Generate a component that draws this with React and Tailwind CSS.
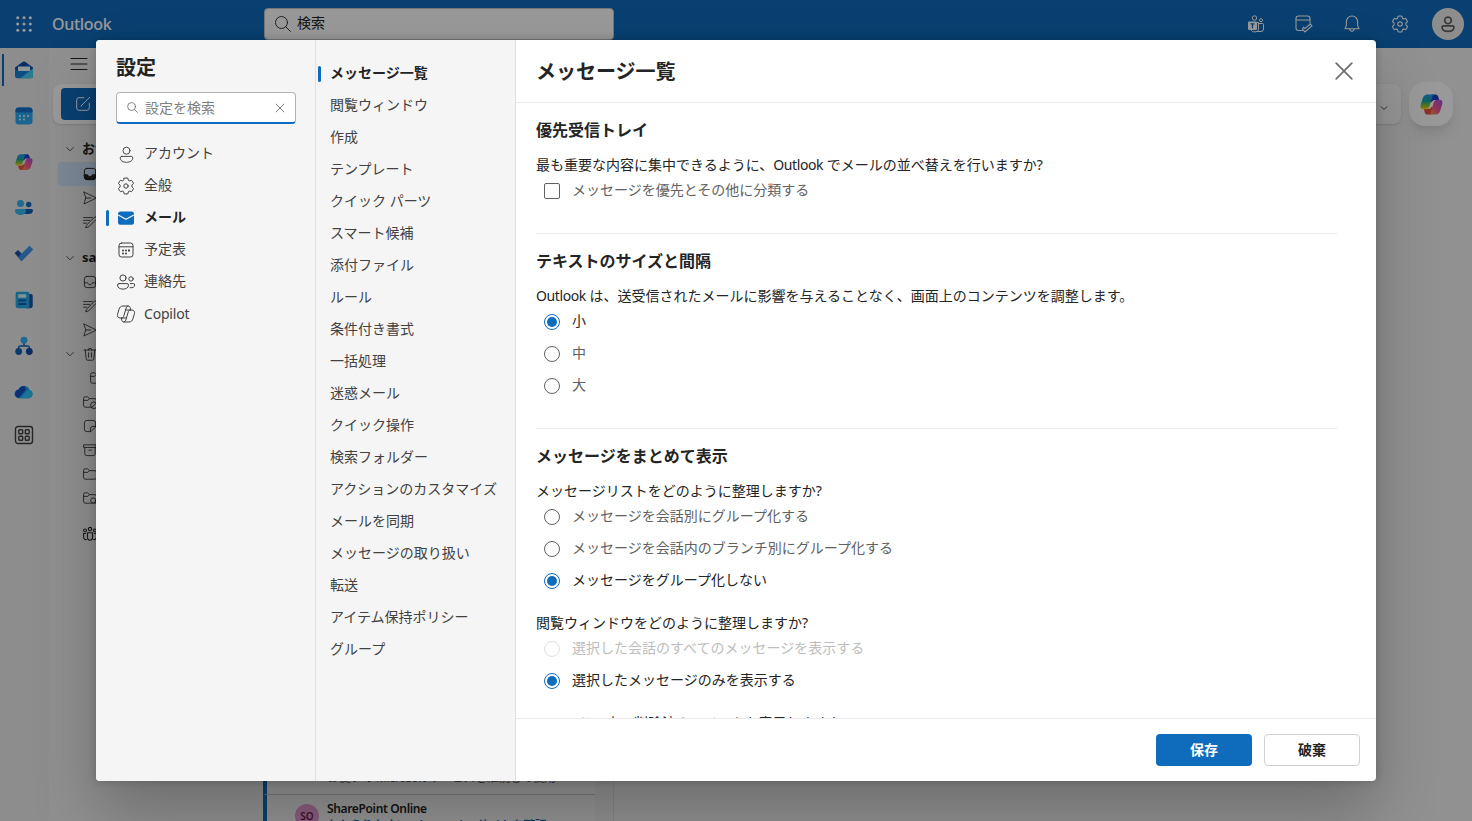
import React from "react";

const S = ({ s = 16, vb = 20, w = 1, className = "", children }) => (
  <svg width={s} height={s} viewBox={`0 0 ${vb} ${vb}`} fill="none" stroke="currentColor" strokeWidth={w} strokeLinecap="round" strokeLinejoin="round" className={`block shrink-0 ${className}`}>
    {children}
  </svg>
);

const GEAR =
  "M8.1 2.2 A8 8 0 0 1 11.9 2.2 L12.3 4 Q12.6 5 13.7 4.9 L15.5 4.3 A8 8 0 0 1 17.5 7.6 L16.1 8.9 Q15.3 10 16.1 11.1 L17.5 12.4 A8 8 0 0 1 15.5 15.7 L13.7 15.1 Q12.6 15 12.3 16 L11.9 17.8 A8 8 0 0 1 8.1 17.8 L7.7 16 Q7.4 15 6.3 15.1 L4.5 15.7 A8 8 0 0 1 2.5 12.4 L3.9 11.1 Q4.7 10 3.9 8.9 L2.5 7.6 A8 8 0 0 1 4.5 4.3 L6.3 4.9 Q7.4 5 7.7 4 Z";

const Gear = (p) => (
  <S {...p}>
    <path d={GEAR} />
    <circle cx="10" cy="10" r="2.2" />
  </S>
);
const Person = (p) => (
  <S {...p}>
    <circle cx="10" cy="6" r="3.7" />
    <path d="M5 12h10a1.6 1.6 0 0 1 1.6 1.6c0 3-3 4.6-6.6 4.6s-6.6-1.6-6.6-4.6A1.6 1.6 0 0 1 5 12z" />
  </S>
);
const Search = (p) => (
  <S {...p}>
    <circle cx="8.5" cy="8.5" r="6" />
    <path d="M12.9 12.9L17.5 17.5" />
  </S>
);
const Close = (p) => (
  <S {...p}>
    <path d="M3.5 3.5l13 13M16.5 3.5l-13 13" />
  </S>
);
const Chevron = (p) => (
  <S {...p}>
    <path d="M4.5 7.5L10 13l5.5-5.5" />
  </S>
);
const Calendar = (p) => (
  <S {...p}>
    <rect x="3" y="3" width="14" height="14" rx="2.5" />
    <path d="M3 6.8h14" />
    <g fill="currentColor" stroke="none">
      <circle cx="7" cy="10.6" r="1" /><circle cx="10" cy="10.6" r="1" /><circle cx="13" cy="10.6" r="1" />
      <circle cx="7" cy="13.6" r="1" /><circle cx="10" cy="13.6" r="1" /><circle cx="13" cy="10.6" r="1" />
    </g>
  </S>
);
const People = (p) => (
  <S {...p}>
    <circle cx="7" cy="6" r="3.1" />
    <circle cx="15" cy="6.9" r="2.2" />
    <path d="M3 11.600h8a1.500 1.500 0 0 1 1.500 1.500c0 2.700-2.400 4-5.500 4s-5.500-1.300-5.500-4a1.500 1.500 0 0 1 1.500-1.500z" />
    <path d="M14.300 11.600h3a1.400 1.400 0 0 1 1.400 1.400c0 2-1.800 3-4.600 2.700" />
  </S>
);
const CopilotLine = (p) => (
  <S {...p}>
    <path d="M5.500 14H4.200C2 14 1 12.300 1.600 10.200L3 5.400C3.600 3.300 4.800 2 7 2h5.200c1.200 0 1.700.8 2 1.800l.5 2.200" />
    <path d="M14.500 6h1.300C18 6 19 7.700 18.400 9.800L17 14.600C16.400 16.700 15.200 18 13 18H7.800c-1.200 0-1.700-.8-2-1.800L5.300 14" />
    <path d="M12.300 2c-1.300 0-1.700.8-2.100 2L7.600 12.500C7.200 13.600 6.700 14 5.500 14M7.700 18c1.300 0 1.700-.8 2.100-2L12.400 7.500C12.800 6.400 13.300 6 14.500 6M9.400 6h5M5.500 14h5" />
  </S>
);
const MailSolid = (p) => (
  <S {...p}>
    <rect x="2" y="3.500" width="16" height="13.200" rx="2.500" fill="#0f6cbd" stroke="none" />
    <path d="M2.600 7.200L10 11.300L17.400 7.200" stroke="#f5f5f5" strokeWidth="1.200" />
  </S>
);
const Inbox = (p) => (
  <S {...p}>
    <rect x="3" y="3" width="14" height="14" rx="3" />
    <path d="M3 11h4c.6 0 .6 2.500 3 2.500s2.400-2.500 3-2.500h4" />
  </S>
);
const InboxFilled = (p) => (
  <S {...p}>
    <rect x="3" y="3" width="14" height="14" rx="3" />
    <path d="M3 11h4c.6 0 .6 2.500 3 2.500s2.400-2.500 3-2.500h4v3a3 3 0 0 1-3 3H6a3 3 0 0 1-3-3z" fill="currentColor" />
  </S>
);
const Send = (p) => (
  <S {...p}>
    <path d="M2.500 2.500L18 10L2.500 17.500L4.600 10zM4.600 10H11" />
  </S>
);
const Drafts = (p) => (
  <S {...p}>
    <path d="M2 4.500h11M2 8h7.500M2 11.500h4M6 13.800L15.200 4.300a1.700 1.700 0 0 1 2.500 2.400L8.400 16l-3.400 1.200z" />
  </S>
);
const Trash = (p) => (
  <S {...p}>
    <path d="M2.500 5h15M7.800 5a2.200 2.200 0 0 1 4.400 0M4 5l1.200 11a2 2 0 0 0 2 1.800h5.600a2 2 0 0 0 2-1.800L16 5M8.200 8.500v5.500M11.800 8.500v5.500" />
  </S>
);
const Folder = ({ children, ...p }) => (
  <S {...p}>
    <path d="M2 7V5.500A2 2 0 0 1 4 3.500h3l2.300 2.300H16a2 2 0 0 1 2 2V14.500a2 2 0 0 1-2 2H4a2 2 0 0 1-2-2zM2 8h4.600c.8 0 1.400-1 2.700-2.200" />
    {children}
  </S>
);
const Note = (p) => (
  <S {...p}>
    <path d="M17 10.500V6a3 3 0 0 0-3-3H6a3 3 0 0 0-3 3v8a3 3 0 0 0 3 3h4.500zM17 10.500h-3.500a3 3 0 0 0-3 3V17" />
  </S>
);
const Archive = (p) => (
  <S {...p}>
    <path d="M2.500 3.500h15v3.300h-15zM3.500 7v7.500a2.500 2.500 0 0 0 2.500 2.500h8a2.500 2.500 0 0 0 2.500-2.500V7M8.500 10.200h3" />
  </S>
);
const Group = (p) => (
  <S {...p} w={1.300}>
    <circle cx="3.800" cy="5.500" r="1.800" /><circle cx="10" cy="3.800" r="2.100" /><circle cx="16.200" cy="5.500" r="1.800" />
    <path d="M6.800 8.500h6.400v6a3.200 3.200 0 0 1-6.400 0zM4.500 9.500H2v4.500a3 3 0 0 0 3.500 3M15.500 9.500H18v4.500a3 3 0 0 1-3.500 3" />
  </S>
);

const CopilotColor = ({ s, id }) => (
  <svg width={s} height={s} viewBox="0 0 24 24" className="block shrink-0">
    <defs>
      <linearGradient id={`${id}a`} x1="0" y1="0" x2="0" y2="1"><stop offset="0" stopColor="#1b9df0" /><stop offset=".45" stopColor="#19a5a8" /><stop offset=".75" stopColor="#8fc52f" /><stop offset="1" stopColor="#ffd21a" /></linearGradient>
      <linearGradient id={`${id}b`} x1="1" y1="0" x2="0" y2="1"><stop offset="0" stopColor="#a64df0" /><stop offset=".5" stopColor="#f0588f" /><stop offset="1" stopColor="#ff9a55" /></linearGradient>
    </defs>
    <path d="M12 1.500h4.300c1.700 0 2.300 1 2.800 2.500L20 7.200h-4c-2 0-3 .6-3.600 2L10.500 10z" fill="#1c3fc4" />
    <path d="M12 22.500H7.700c-1.700 0-2.300-1-2.800-2.500L4 16.800h4c2 0 3-.6 3.600-2l1.900-.8z" fill="#f0503c" />
    <path d="M7.800 1.500H15.500c-1.600 0-2.200 1.300-2.700 2.800L9.700 14C9.200 15.500 8.300 17 6.500 17H3.500C1 17 0 15 .8 12.300L3 5.200C3.700 2.900 5.200 1.500 7.800 1.500z" fill={`url(#${id}a)`} />
    <path d="M16.200 22.500H8.500c1.600 0 2.200-1.300 2.700-2.800L14.300 10C14.800 8.500 15.700 7 17.500 7h3C23 7 24 9 23.200 11.700L21 18.800c-.7 2.300-2.200 3.700-4.800 3.700z" fill={`url(#${id}b)`} />
  </svg>
);

const RailMail = () => (
  <svg width="20" height="20" viewBox="0 0 20 20">
    <path d="M1 7.500L8.500 2a2.500 2.500 0 0 1 3 0L19 7.500V12H1z" fill="#0f4fa8" />
    <path d="M4 6.500h12v7H4z" fill="#f4faff" />
    <path d="M1 8.500l3 2.500h12l3-2.500v7.500a2.300 2.300 0 0 1-2.300 2.300H3.300A2.300 2.300 0 0 1 1 16z" fill="#1583dc" />
    <path d="M19 8.500L6 18.300h10.700A2.300 2.300 0 0 0 19 16z" fill="#45cdf0" />
  </svg>
);
const RailCalendar = () => (
  <svg width="20" height="20" viewBox="0 0 20 20">
    <rect x="1.500" y="1.500" width="17" height="17" rx="3" fill="#2aa9ee" />
    <path d="M1.500 6.500v-2a3 3 0 0 1 3-3h11a3 3 0 0 1 3 3v2z" fill="#1272cc" />
    <g fill="#e8f8ff"><circle cx="6" cy="10" r="1" /><circle cx="10" cy="10" r="1" /><circle cx="14" cy="10" r="1" /><circle cx="6" cy="13.500" r="1" /><circle cx="10" cy="13.500" r="1" /></g>
  </svg>
);
const RailPeople = () => (
  <svg width="20" height="20" viewBox="0 0 20 20">
    <circle cx="6.500" cy="5.500" r="3.500" fill="#2fb5ee" /><circle cx="14.700" cy="6.500" r="2.700" fill="#0f6cbd" />
    <path d="M10 11h7.500A1.500 1.500 0 0 1 19 12.500c0 2.500-2 3.500-4.500 3.500H10z" fill="#0f5fb4" />
    <path d="M2.500 11h8a1.500 1.500 0 0 1 1.500 1.500c0 3-2.500 4.500-5.500 4.500S1 15.500 1 12.500A1.500 1.500 0 0 1 2.500 11z" fill="#36b9f0" />
  </svg>
);
const RailTodo = () => (
  <svg width="20" height="20" viewBox="0 0 20 20">
    <path d="M.6 9.300L4 6l7 7-3.500 3.700z" fill="#1a4fae" />
    <path d="M4 13.200L15.500 1.800 19.300 5.500 8.500 16.500a1.400 1.400 0 0 1-2 0z" fill="#3f95e8" />
  </svg>
);
const RailNews = () => (
  <svg width="20" height="20" viewBox="0 0 20 20">
    <path d="M12 4h5a1.700 1.700 0 0 1 1.700 1.700v9.800a2.700 2.700 0 0 1-2.700 2.700h-4z" fill="#0f55a4" />
    <path d="M3.300 1.700h10.400A1.700 1.700 0 0 1 15.400 3.400v14.800H4.300a2.700 2.700 0 0 1-2.700-2.700V3.400a1.700 1.700 0 0 1 1.700-1.700z" fill="#27a8e8" />
    <rect x="4.200" y="4.300" width="8" height="3.500" rx=".5" fill="#d8f3ff" />
    <path d="M4.200 10.500h8M4.200 14h8" stroke="#0f62b4" strokeWidth="1.800" />
  </svg>
);
const RailOrg = () => (
  <svg width="20" height="20" viewBox="0 0 20 20">
    <path d="M10 6v4M4.700 13v-1.500A1.500 1.500 0 0 1 6.200 10h7.600a1.500 1.500 0 0 1 1.500 1.500V13" stroke="#1468bb" strokeWidth="1.600" fill="none" />
    <circle cx="10" cy="4.200" r="3.400" fill="#2cb3ee" /><circle cx="4.700" cy="15.500" r="3.400" fill="#1065b8" /><circle cx="15.300" cy="15.500" r="3.400" fill="#0d4ba6" />
  </svg>
);
const RailCloud = () => (
  <svg width="20" height="20" viewBox="0 0 20 20">
    <path d="M5 16.200A4.300 4.300 0 0 1 4.600 7.600 5.800 5.800 0 0 1 15.500 8 4.200 4.200 0 0 1 15 16.200z" fill="#17a0ee" />
    <path d="M4.500 16A4.300 4.300 0 0 1 4.600 7.600 5.800 5.800 0 0 1 10.500 4L12 7.800z" fill="#1550c4" />
    <path d="M6 16.200L13 8.500a4 4 0 0 1 3.500 0 4.200 4.200 0 0 1-1.500 7.700z" fill="#2ec4f4" />
  </svg>
);
const RailApps = () => (
  <S s={20} w={1.400} className="text-[#424242]">
    <rect x="1.500" y="1.500" width="17" height="17" rx="2.500" />
    <rect x="4.800" y="4.800" width="3.900" height="3.900" rx=".8" /><rect x="11.300" y="4.800" width="3.900" height="3.900" rx=".8" />
    <rect x="4.800" y="11.300" width="3.900" height="3.900" rx=".8" /><rect x="11.300" y="11.300" width="3.900" height="3.900" rx=".8" />
  </S>
);

const Waffle = () => (
  <svg width="16" height="16" viewBox="0 0 16 16" fill="#fff" className="block">
    {[1.7, 8, 14.3].map((y) => [1.7, 8, 14.3].map((x) => <circle key={`${x}-${y}`} cx={x} cy={y} r="1.500" />))}
  </svg>
);
const Teams = () => (
  <svg width="18" height="18" viewBox="0 0 18 18" fill="none" stroke="#fff" strokeWidth="1" className="block">
    <circle cx="7.500" cy="3" r="2.200" /><circle cx="14" cy="5.200" r="1.500" />
    <path d="M10 7.500h1.500v7A2.500 2.500 0 0 1 9 16.800H6.500c-1.200 0-2-.8-2.300-1.800M12 8.500h3.500a1 1 0 0 1 1 1v4.500a2.500 2.500 0 0 1-2.500 2.500h-4" />
    <rect x="1" y="6.500" width="9" height="8.500" rx="1.200" fill="#fff" stroke="none" />
    <path d="M3.500 8.800h4M5.500 8.800v4.500" stroke="#0f6cbd" strokeWidth="1.300" />
  </svg>
);
const DayCheck = () => (
  <S s={20} w={1.100} className="-mx-px text-white">
    <path d="M8.500 16.500H4.500a2.500 2.500 0 0 1-2.500-2.500V4.500A2.500 2.500 0 0 1 4.500 2h9A2.500 2.500 0 0 1 16 4.500V9M2 6h14M8.500 14.800l2.300 3.200L18 11.800l-1.600-1.800-5.700 4.700-1.100-1.500z" />
  </S>
);
const Bell = () => (
  <S s={20} w={1.100} className="-mx-px text-white">
    <path d="M10 2a5.600 5.600 0 0 0-5.600 5.600v4L3 14.800h14l-1.400-3.200v-4A5.600 5.600 0 0 0 10 2zM7.800 15a2.200 2.200 0 0 0 4.400 0" />
  </S>
);

const rail = [
  <RailMail />, <RailCalendar />, <CopilotColor s={18} id="rail" />, <RailPeople />, <RailTodo />, <RailNews />, <RailOrg />, <RailCloud />, <RailApps />,
];

const FolderRow = ({ chevron, icon, label, selected, indent, className = "" }) => (
  <div className={`flex h-6 items-center text-[#242424] ${selected ? "ml-[9px] rounded-l bg-[#cfe4fa] pl-6" : indent ? "pl-10" : chevron ? "pl-[15px]" : "pl-[33px]"} ${className}`}>
    {chevron && <Chevron s={12} w={1.300} className="mr-1.5" />}
    {icon}
    {label && <span className="pb-px text-[13px] font-bold whitespace-nowrap">{label}</span>}
  </div>
);

function Backdrop() {
  return (
    <div className="flex h-full w-full flex-col bg-[#f0f0f0]">
      <header className="flex h-12 shrink-0 items-center bg-[#0f6cbd] text-white">
        <div className="flex w-12 justify-center"><Waffle /></div>
        <span className="ml-1 w-[212px] text-base font-medium tracking-[-0.3px]">Outlook</span>
        <div className="flex h-8 w-[350px] items-center gap-1 rounded border border-[#c7c7c7] bg-white text-sm text-[#242424]">
          <Search s={20} w={0.900} className="ml-2" />
          <span className="pb-0.5">検索</span>
        </div>
        <div className="ml-auto flex items-center gap-[30px] pr-2">
          <Teams /><DayCheck /><Bell /><Gear s={20} w={1.100} className="-mx-px" />
          <div className="-ml-[7px] flex size-8 items-center justify-center rounded-full bg-[#ebebeb] text-[#616161]"><Person s={18} w={1.900} /></div>
        </div>
      </header>
      <div className="flex min-h-0 flex-1">
        <nav className="flex w-[49px] shrink-0 flex-col bg-[#ebebeb]">
          {rail.map((icon, i) => (
            <div key={i} className={`flex h-[46px] items-center ${i === 0 ? "-mt-px" : i === 8 ? "-mt-[3px]" : ""}`}>
              <span className={`ml-0.5 h-8 w-0.5 ${i === 0 ? "bg-[#0f6cbd]" : ""}`} />
              <span className="flex w-10 justify-center">{icon}</span>
            </div>
          ))}
        </nav>
        <aside className="w-[214px] shrink-0 overflow-hidden pt-2">
          <div className="ml-5 flex h-4 items-center"><S s={20} w={1.100}><path d="M2 4.500h16M2 10h16M2 15.500h16" /></S></div>
          <div className="mt-3 ml-1 flex h-10 items-center rounded-lg bg-white pl-2 shadow">
            <div className="flex h-8 w-28 items-center rounded bg-[#0f6cbd] pl-[13px] text-white">
              <S s={18} w={1.100}><path d="M11 3H5.500A2.500 2.500 0 0 0 3 5.500v9A2.500 2.500 0 0 0 5.500 17h9a2.500 2.500 0 0 0 2.500-2.500V9M8.500 11.500L17.500 2.500M8.500 11.500l-.5 1" /></S>
            </div>
          </div>
          <div className="pt-[13px]">
            <FolderRow chevron label="お気に入り" />
            <FolderRow selected icon={<InboxFilled s={16} w={1.200} />} className="mt-px" />
            <FolderRow icon={<Send />} />
            <FolderRow icon={<Drafts />} />
            <FolderRow chevron label="sample" className="mt-3" />
            <FolderRow icon={<Inbox />} />
            <FolderRow icon={<Drafts />} />
            <FolderRow icon={<Send />} />
            <FolderRow chevron icon={<Trash />} />
            <FolderRow indent icon={<Folder />} />
            <FolderRow icon={<Folder><circle cx="15" cy="14" r="4.200" fill="#f0f0f0" /><path d="M12 17l6-6" /></Folder>} />
            <FolderRow icon={<Note />} />
            <FolderRow icon={<Archive />} />
            <FolderRow icon={<Folder />} />
            <FolderRow icon={<Folder><circle cx="14" cy="13" r="3.200" fill="#f0f0f0" /><path d="M16.500 15.500l2.500 2.500" /></Folder>} />
            <FolderRow icon={<Group />} className="mt-3" />
          </div>
        </aside>
        <section className="flex w-[332px] shrink-0 flex-col justify-end overflow-hidden bg-[#f5f5f5]">
          <div className="flex h-[60px] shrink-0 items-end border-b border-[#c8c8c8] border-l-4 border-l-[#0f6cbd] pl-[60px] pb-2 text-xs leading-4 tracking-[-0.4px] whitespace-nowrap text-[#616161]">お使いの Microsoft サービスを継続して使用</div>
          <div className="flex h-[26px] shrink-0 border-l-4 border-l-[#0f6cbd] pl-7">
            <div className="mt-[9px] flex size-6 shrink-0 items-center justify-center rounded-full bg-[#e59cd0] text-[10px] font-semibold text-[#6b1f55]">SO</div>
            <div className="ml-2 h-[26px] overflow-hidden text-xs leading-4 whitespace-nowrap">
              <div className="mt-1.5 font-semibold tracking-[-0.35px] text-[#242424]">SharePoint Online</div>
              <div className="mt-px font-bold tracking-[-0.45px] text-[#0f6cbd]">おかえりなさい! SharePoint サイトを確認</div>
            </div>
          </div>
        </section>
        <div className="w-[19px] shrink-0 border-r border-[#e0e0e0] bg-[#f0f0f0]" />
        <main className="flex flex-1 items-start justify-end bg-[#f2f2f2] pt-[34px] pr-[19px]">
          <div className="mt-[2px] flex h-10 w-80 items-center justify-end rounded-lg bg-[#fafafa] pt-2 pr-3 shadow"><Chevron s={10} w={1.600} /></div>
          <div className="ml-2 flex size-11 items-center justify-center rounded-2xl bg-white shadow-lg"><CopilotColor s={23} id="fab" /></div>
        </main>
      </div>
    </div>
  );
}

const sections = [
  ["アカウント", <Person s={19} />],
  ["全般", <Gear s={20} />],
  ["メール", <MailSolid s={20} />],
  ["予定表", <Calendar s={20} w={1} />],
  ["連絡先", <People s={20} />],
  [<span className="tracking-[-0.2px]">Copilot</span>, <CopilotLine s={20} />],
];
const pages = ["メッセージ一覧", "閲覧ウィンドウ", "作成", "テンプレート", "クイック パーツ", "スマート候補", "添付ファイル", "ルール", "条件付き書式", "一括処理", "迷惑メール", "クイック操作", "検索フォルダー", "アクションのカスタマイズ", "メールを同期", "メッセージの取り扱い", "転送", "アイテム保持ポリシー", "グループ"];

const Option = ({ children, type = "radio", checked, disabled }) => (
  <label className={`flex h-8 items-center pl-2 ${disabled ? "text-[#bdbdbd]" : checked ? "text-[#242424]" : "text-[#616161]"}`}>
    <span className={`flex size-4 items-center justify-center border ${type === "radio" ? "rounded-full" : "rounded-xs"} ${disabled ? "border-[#e0e0e0]" : checked ? "border-[#0f6cbd]" : "border-[#616161]"}`}>
      {checked && <span className="size-2.5 rounded-full bg-[#0f6cbd]" />}
    </span>
    <span className="ml-3 pb-0.5">{children}</span>
  </label>
);
const Heading = ({ children }) => <h3 className="text-base leading-[22px] font-bold">{children}</h3>;
const Question = ({ children, className = "" }) => <p className={`leading-5 ${className}`}>{children}</p>;
const Brand = () => <span className="tracking-[-0.4px]">Outlook</span>;

function Dialog() {
  return (
    <div className="flex h-[741px] w-[1280px] overflow-hidden rounded bg-white shadow-[0_0_8px_rgba(0,0,0,0.2),0_32px_64px_rgba(0,0,0,0.24)]">
      <div className="w-[220px] shrink-0 border-r border-[#e0e0e0] bg-[#f5f5f5]">
        <h1 className="mt-3.5 ml-5 text-xl leading-7 font-bold">設定</h1>
        <div className="mt-2.5 ml-5 flex h-8 w-[180px] items-center rounded border border-b-2 border-[#b3b3b3] border-b-[#0f6cbd] bg-white pl-[9px] pr-[9px] text-[#616161]">
          <Search s={13} w={1.200} />
          <span className="ml-1.5 flex-1 text-[#808080]">設定を検索</span>
          <Close s={12} w={1.400} />
        </div>
        <ul className="mt-3.5">
          {sections.map(([name, icon], i) => (
            <li key={i} className={`flex h-8 items-center ${i === 2 ? "font-bold text-[#242424]" : "text-[#424242]"}`}>
              <span className={`ml-2.5 h-4 w-[3px] rounded-full ${i === 2 ? "bg-[#0f6cbd]" : ""}`} />
              <span className="ml-[7px] flex w-5 justify-center">{icon}</span>
              <span className={`ml-2 ${i === 5 ? "" : "pb-0.5"}`}>{name}</span>
            </li>
          ))}
        </ul>
      </div>
      <ul className="w-[200px] shrink-0 border-r border-[#e0e0e0] bg-[#f5f5f5] pt-[18px]">
        {pages.map((name, i) => (
          <li key={name} className={`flex h-8 items-center whitespace-nowrap ${i === 0 ? "font-bold text-[#242424]" : "text-[#424242]"}`}>
            <span className={`ml-0.5 h-4 w-[3px] rounded-full ${i === 0 ? "bg-[#0f6cbd]" : ""}`} />
            <span className="ml-[9px] pb-0.5">{name}</span>
          </li>
        ))}
      </ul>
      <div className="flex min-w-0 flex-1 flex-col">
        <div className="flex h-[63px] shrink-0 items-center justify-between border-b border-[#ebebeb] pr-5 pl-5">
          <h2 className="pt-0.5 text-xl font-bold">メッセージ一覧</h2>
          <Close s={24} w={1.500} className="text-[#707070]" />
        </div>
        <div className="min-h-0 flex-1 overflow-hidden pr-[39px] pl-5">
          <section className="h-[131px] border-b border-[#ebebeb] pt-4">
            <Heading>優先受信トレイ</Heading>
            <Question className="mt-3.5">最も重要な内容に集中できるように、<Brand /> でメールの並べ替えを行いますか?</Question>
            <Option type="checkbox">メッセージを優先とその他に分類する</Option>
          </section>
          <section className="h-[195px] border-b border-[#ebebeb] pt-4">
            <Heading>テキストのサイズと間隔</Heading>
            <Question className="mt-3.5"><Brand /> は、送受信されたメールに影響を与えることなく、画面上のコンテンツを調整します。</Question>
            <Option checked>小</Option>
            <Option>中</Option>
            <Option>大</Option>
          </section>
          <section className="pt-4">
            <Heading>メッセージをまとめて表示</Heading>
            <Question className="mt-3.5">メッセージリストをどのように整理しますか?</Question>
            <Option>メッセージを会話別にグループ化する</Option>
            <Option>メッセージを会話内のブランチ別にグループ化する</Option>
            <Option checked>メッセージをグループ化しない</Option>
            <Question className="mt-4">閲覧ウィンドウをどのように整理しますか?</Question>
            <Option disabled>選択した会話のすべてのメッセージを表示する</Option>
            <Option checked>選択したメッセージのみを表示する</Option>
            <Question className="mt-4">スレッドの中の削除済みアイテムを表示しますか?</Question>
          </section>
        </div>
        <div className="flex h-[63px] shrink-0 items-center justify-end gap-3 border-t border-[#ebebeb] pr-4 font-bold">
          <button className="h-8 w-24 rounded bg-[#0f6cbd] text-white">保存</button>
          <button className="h-8 w-24 rounded border border-[#d1d1d1] bg-white">破棄</button>
        </div>
      </div>
    </div>
  );
}

export default function App() {
  return (
    <div className="relative h-[821px] w-[1472px] overflow-hidden font-['Noto_Sans','Noto_Sans_CJK_JP',sans-serif] text-sm text-[#242424]">
      <Backdrop />
      <div className="absolute inset-0 flex items-center justify-center bg-black/40">
        <Dialog />
      </div>
    </div>
  );
}
